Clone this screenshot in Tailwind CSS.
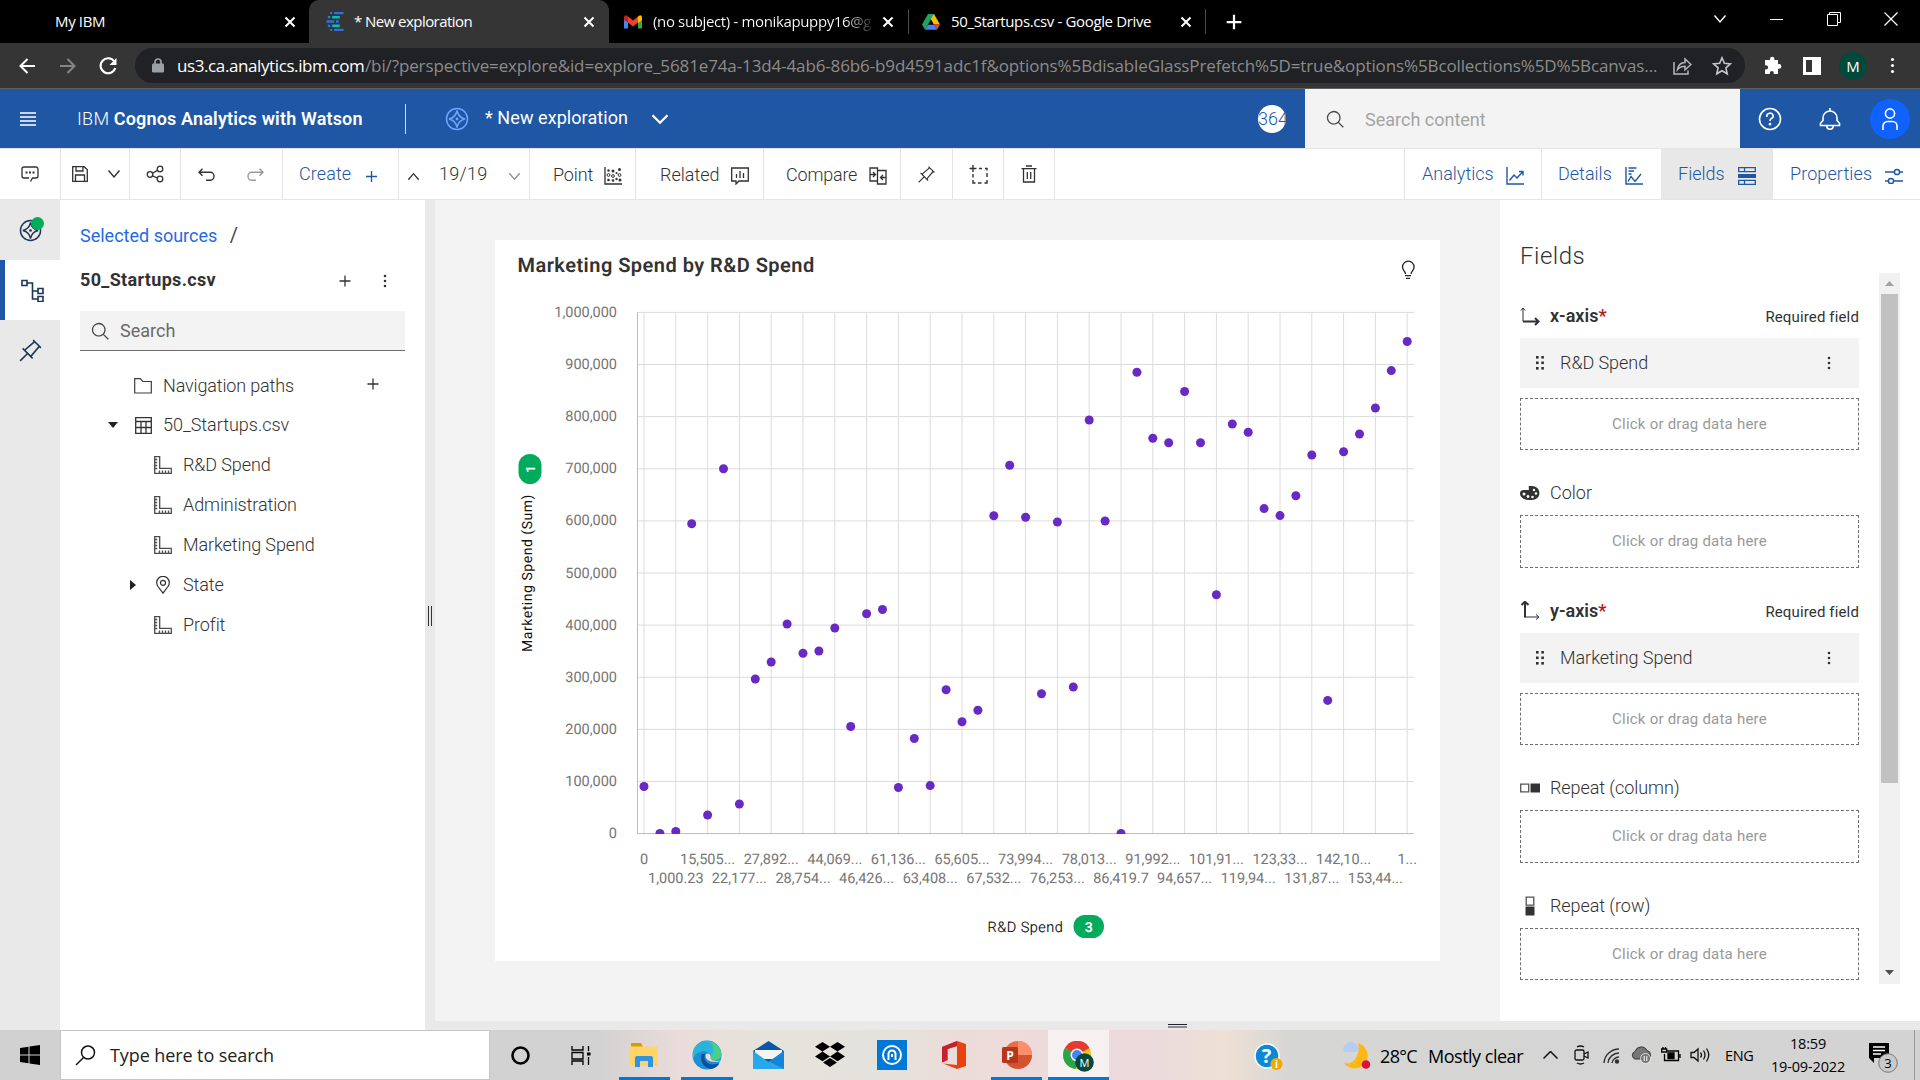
<!DOCTYPE html>
<html lang="en">
<head>
<meta charset="utf-8">
<title>* New exploration</title>
<script src="https://cdn.jsdelivr.net/npm/@tailwindcss/browser@4"></script>
</head>
<body class="w-[1920px] h-[1080px] overflow-hidden bg-white font-['Roboto',sans-serif] text-[18px] leading-6 text-[#323232]">
<svg class="hidden">
  <symbol id="x" viewBox="0 0 12 12"><path d="M1.5 1.5l9 9M10.500 1.500l-9 9" stroke="currentColor" stroke-width="2" fill="none"/></symbol>
  <symbol id="plus" viewBox="0 0 16 16"><path d="M8 2.500v11M2.500 8h11" stroke="currentColor" stroke-width="1.300" fill="none"/></symbol>
  <symbol id="chev" viewBox="0 0 16 16"><path d="M2.500 4.500L8 11l5.500-6.500" stroke="currentColor" stroke-width="1.400" fill="none"/></symbol>
  <symbol id="search" viewBox="0 0 32 32"><path fill="currentColor" d="M30 28.590L22.450 21A11 11 0 1 0 21 22.450L28.590 30zM5 14a9 9 0 1 1 9 9 9 9 0 0 1-9-9z"/></symbol>
  <symbol id="dots" viewBox="0 0 16 16"><g fill="currentColor"><circle cx="8" cy="3" r="1.300"/><circle cx="8" cy="8" r="1.300"/><circle cx="8" cy="13" r="1.300"/></g></symbol>
  <symbol id="pin" viewBox="0 0 32 32"><path fill="currentColor" d="M28.590,13.310,30,11.900,20,2,18.690,3.420,19.870,4.600,8.380,14.320,6.660,12.610,5.250,14l5.660,5.680L2,28.580,3.410,30l8.910-8.910L18,26.750l1.390-1.420-1.710-1.710L27.400,12.130ZM16.260,22.200,9.800,15.740,21.290,6,26,10.710Z"/></symbol>
  <symbol id="explore" viewBox="0 0 24 24"><g fill="none" stroke="currentColor" stroke-width="1.500"><circle cx="12" cy="12" r="10.500"/><path d="M12 3.500c.8 4.500 3.500 7.500 8 8.500-4.500 1-7.200 4-8 8.500-.8-4.500-3.500-7.500-8-8.500 4.500-1 7.200-4 8-8.500z"/></g><circle cx="12" cy="12" r="1.400" fill="currentColor"/></symbol>
  <symbol id="ruler" viewBox="0 0 18 18"><path d="M.7.7h5v11.600h11.600v5H.7zM.7 3.500h2.500M.7 6.500h2.500M.7 9.500h2.500M.7 12.500h2.500M5.500 17v-2.500M8.500 17v-2.500M11.500 17v-2.500M14.500 17v-2.500" fill="none" stroke="#4c4c4c" stroke-width="1.300"/></symbol>
  <symbol id="drag" viewBox="0 0 10 14"><g fill="#323232"><rect x="1" y="0" width="2.600" height="2.600"/><rect x="6.300" y="0" width="2.600" height="2.600"/><rect x="1" y="5.500" width="2.600" height="2.600"/><rect x="6.300" y="5.500" width="2.600" height="2.600"/><rect x="1" y="11" width="2.600" height="2.600"/><rect x="6.300" y="11" width="2.600" height="2.600"/></g></symbol>
</svg>

<!-- tab strip -->
<div class="flex h-[43px] bg-black text-white font-['Open_Sans',sans-serif] text-[15px] tracking-[-0.36px]">
  <div class="flex items-center w-[309px] pl-[55px] pr-[13px]"><span class="flex-1 pb-0.5">My IBM</span><svg class="size-3"><use href="#x"/></svg></div>
  <div class="flex items-center w-[300px] pl-4 pr-[14px] bg-[#353535] rounded-t-[10px]">
    <svg class="w-5 h-[19px] mr-[9px]" viewBox="0 0 20 20"><path d="M9 1h10M1 10h8M11 10h3M9 19h10" stroke="#2f6fde" stroke-width="2.600"/><path d="M7 5.500h8M7 14.500h8" stroke="#08bdba" stroke-width="2.600"/><path d="M5 1h2M2.500 5.500h2.500M2.500 14.500h2.500M5 19h2" stroke="#1c86c4" stroke-width="2.400"/></svg>
    <span class="flex-1 tracking-[-0.55px] pb-0.5">* New exploration</span><svg class="size-3"><use href="#x"/></svg></div>
  <div class="flex items-center w-[299px] pl-[15px] pr-[14px]">
    <svg class="w-[18px] h-[14px] mr-[11px]" viewBox="0 0 18 14"><path d="M0 2v11.500h4V6z" fill="#4285f4"/><path d="M18 2v11.500h-4V6z" fill="#34a853"/><path d="M14 1.500L16 .3q2 0 2 2V5l-4 3z" fill="#fbbc04"/><path d="M4 1.500l5 4 5-4V7.500l-5 4-5-4z" fill="#ea4335"/><path d="M0 5V2.300Q.3 0 2.500.4L4 1.500v6z" fill="#c5221f"/></svg>
    <span class="w-[219px] mr-[10px] pb-0.5 overflow-hidden whitespace-nowrap bg-linear-to-r from-white from-88% to-[#222] bg-clip-text text-transparent">(no subject) - monikapuppy16@g</span><svg class="size-3 shrink-0"><use href="#x"/></svg></div>
  <div class="flex items-center w-[298px] pl-[13px] pr-[13px] my-[9px] border-x border-[#4a4a4a]">
    <svg class="w-[18px] h-4 mr-[11px]" viewBox="0 0 18 16"><path d="M6 0h6l6 10.500h-6z" fill="#fbbc04"/><path d="M12 10.500h6l-3 5.300z" fill="#ea4335"/><path d="M6 10.500h6l3 5.300H3z" fill="#4285f4"/><path d="M9 5.200l3 5.300H6z" fill="#000"/><path d="M6 0h6L3 15.800 0 10.500z" fill="#1ea362"/><path d="M9 5.200L12 0l0 0v10.500z" fill="#fbbc04"/></svg>
    <span class="flex-1 pb-0.5">50_Startups.csv - Google Drive</span><svg class="size-3"><use href="#x"/></svg></div>
  <div class="flex items-center pl-[19px]"><svg class="size-[18px] text-white" viewBox="0 0 16 16"><path d="M8 1.500v13M1.500 8h13" stroke="currentColor" stroke-width="2"/></svg></div>
  <div class="ml-auto flex h-[38px] items-center">
    <div class="w-[57px] flex justify-center"><svg class="size-4"><use href="#chev"/></svg></div>
    <div class="w-[57px] flex justify-center"><div class="w-[13px] h-px bg-white"></div></div>
    <div class="w-[57px] flex justify-center"><svg class="size-[14px]" viewBox="0 0 14 14" fill="none" stroke="#fff"><path d="M.5 2.500h10v11h-10zM2.500 2.500V.5h11v10H10.500"/></svg></div>
    <div class="w-[58px] flex justify-center"><svg class="size-[14px]" viewBox="0 0 14 14" stroke="#fff" stroke-width="1.200"><path d="M.5.5l13 13M13.500.5l-13 13"/></svg></div>
  </div>
</div>

<!-- address bar -->
<div class="flex h-[46px] items-center bg-[#353535] border-b border-[#5f5f5f] text-white font-['Open_Sans',sans-serif]">
  <svg class="w-[17px] h-4 ml-[19px]" viewBox="0 0 17 16" fill="none" stroke="#fff" stroke-width="2"><path d="M16 8H2M8.500 1L1.500 8l7 7"/></svg>
  <svg class="w-[17px] h-4 ml-[23px]" viewBox="0 0 17 16" fill="none" stroke="#858585" stroke-width="2"><path d="M1 8h14M8.500 1l7 7-7 7"/></svg>
  <svg class="size-[18px] ml-[23px]" viewBox="0 0 18 18" fill="none" stroke="#fff" stroke-width="2.100"><path d="M15.300 4.500A7.500 7.500 0 1 0 16.300 11"/><path d="M17.500 1v7h-7z" fill="#fff" stroke="none"/></svg>
  <div class="flex items-center w-[1610px] h-[35px] ml-[18px] rounded-full bg-[#202124] pl-[17px]">
    <svg class="w-3 h-[15px] mr-[13px]" viewBox="0 0 12 15"><path d="M3 6V4a3 3 0 0 1 6 0v2" fill="none" stroke="#9aa0a6" stroke-width="1.700"/><rect y="5.500" width="12" height="9" rx="1.200" fill="#9aa0a6"/></svg>
    <span class="w-[188px] text-[17px] tracking-[-0.4px]">us3.ca.analytics.ibm.com</span><span class="w-[1292px] whitespace-nowrap text-[17px] tracking-[-0.12px] text-[#8c8c8c]">/bi/?perspective=explore&amp;id=explore_5681e74a-13d4-4ab6-86b6-b9d4591adc1f&amp;options%5BdisableGlassPrefetch%5D=true&amp;options%5Bcollections%5D%5Bcanvas...</span>
    <svg class="w-[19px] h-[18px] ml-[16px]" viewBox="0 0 19 18" fill="none" stroke="#b4b6b8" stroke-width="1.500"><path d="M1 5v12h14v-3.500"/><path d="M4.500 12.500C5.200 8 8 5.700 12 5.500V2l6 5.500-6 5.300V9.200c-3.500 0-5.500.8-7.500 3.300z"/></svg>
    <svg class="size-5 ml-5" viewBox="0 0 20 20" fill="none" stroke="#c4c6c8" stroke-width="1.600"><path d="M10 1.800l2.400 5.500 6 .6-4.500 4 1.300 5.900L10 14.700l-5.200 3.100 1.300-5.900-4.500-4 6-.6z"/></svg>
  </div>
  <svg class="size-[19px] ml-[18px]" viewBox="0 0 19 19" fill="#fff"><path d="M7 4V3a2.200 2.200 0 0 1 4.400 0v1H15v4h1a2.400 2.400 0 0 1 0 4.800h-1V18h-4.200v-1a2 2 0 0 0-4 0v1H2v-4.500h1a2 2 0 0 0 0-4.200H2V4z"/></svg>
  <svg class="w-[18px] h-[18px] ml-[21px]" viewBox="0 0 18 18"><path d="M0 0h18v18H0zM3 3v12h6V3z" fill="#fff" fill-rule="evenodd"/></svg>
  <div class="size-7 ml-[18px] rounded-full bg-[#00493c] text-center text-[15px] leading-7">M</div>
  <svg class="size-[19px] ml-4"><use href="#dots"/></svg>
</div>

<!-- product header -->
<div class="flex h-[59px] items-center bg-[#1f57a4] text-white">
  <svg class="w-4 h-[14px] ml-5" viewBox="0 0 16 14" stroke="#fff" stroke-width="1.300"><path d="M0 1h16M0 5h16M0 9h16M0 13h16"/></svg>
  <div class="ml-[41px] w-[328px] whitespace-nowrap"><span class="font-light tracking-[0.3px]">IBM</span> <span class="font-semibold tracking-[0.16px]">Cognos Analytics with Watson</span></div>
  <div class="w-px h-[30px] bg-white/80"></div>
  <svg class="size-6 ml-[39px] text-[#6ea6ff]"><use href="#explore"/></svg>
  <div class="ml-4 w-[142px] whitespace-nowrap tracking-[0.07px] pb-0.5">* New exploration</div>
  <svg class="size-5 ml-[23px]" viewBox="0 0 16 16"><path d="M2 5l6 6 6-6" stroke="#fff" stroke-width="1.800" fill="none"/></svg>
  <div class="size-7 ml-[588px] rounded-full bg-white text-[#1f57a4] overflow-hidden whitespace-nowrap leading-7 font-light">364</div>
  <div class="flex items-center w-[435px] h-full ml-auto bg-[#f3f3f3]">
    <svg class="size-5 ml-5 text-[#464646]"><use href="#search"/></svg><span class="ml-[20px] pt-0.5 text-[#a4a4a4]">Search content</span>
  </div>
  <div class="w-[60px] flex justify-center"><svg class="size-6" viewBox="0 0 24 24" fill="none" stroke="#fff" stroke-width="1.600"><circle cx="12" cy="12" r="10.500"/><path d="M8.800 10V9a3.200 2.800 0 1 1 4.500 2.500c-.9.500-1.300 1-1.300 2.500"/><circle cx="12" cy="17.200" r=".6"/></svg></div>
  <div class="w-[60px] flex justify-center"><svg class="size-6" viewBox="0 0 24 24" fill="none" stroke="#fff" stroke-width="1.600"><path d="M12 1v3M2.500 18.500v-2.300L5 13.500V11a7 7 0 0 1 14 0v2.500l2.500 2.700v2.300zM8.800 19a3.200 3.200 0 0 0 6.400 0"/></svg></div>
  <div class="w-[60px] flex justify-center"><div class="flex items-center justify-center size-10 rounded-full bg-[#0f62fe]"><svg class="w-4 h-[22px]" viewBox="0 0 16 22" fill="none" stroke="#fff" stroke-width="1.600"><circle cx="8" cy="5.500" r="4.600"/><path d="M1 22v-4a4.500 4.500 0 0 1 4.500-4.500h5A4.500 4.500 0 0 1 15 18v4"/></svg></div></div>
</div>

<!-- toolbar -->
<div class="flex h-[52px] border-y border-[#e5e5e5] bg-white">
  <div class="flex w-[61px] items-center justify-center border-r border-[#e5e5e5]"><svg class="w-[18px] h-4" viewBox="0 0 18 16" fill="none" stroke="#323232" stroke-width="1.300"><path d="M9.500 15.500l2-3.500H15a2 2 0 0 0 2-2V3a2 2 0 0 0-2-2H3a2 2 0 0 0-2 2v7a2 2 0 0 0 2 2h5"/><path d="M4.500 6.500h2M8 6.500h2M11.500 6.500h2" stroke-width="2"/></svg></div>
  <div class="flex w-[69px] items-center pl-[11px] border-r border-[#e5e5e5]"><svg class="size-4" viewBox="0 0 16 16" fill="none" stroke="#323232" stroke-width="1.300"><path d="M.7.7h11.500l3.100 3.100v11.500H.7zM4 1v4h7V1M3.500 15V9h9v6"/></svg><svg class="size-4 ml-[18px]"><use href="#chev"/></svg></div>
  <div class="flex w-[51px] items-center justify-center border-r border-[#e5e5e5]"><svg class="size-[18px]" viewBox="0 0 18 18" fill="none" stroke="#323232" stroke-width="1.300"><circle cx="4" cy="9.500" r="2.800"/><circle cx="14" cy="4" r="2.800"/><circle cx="14" cy="14" r="2.800"/><path d="M6.500 8.200l5-2.800M6.500 10.800l5 2.200"/></svg></div>
  <div class="flex w-[102px] items-center border-r border-[#e5e5e5]"><svg class="w-[17px] h-[13px] ml-[17px]" viewBox="0 0 17 13" fill="none" stroke="#323232" stroke-width="1.400"><path d="M4.500.700L1 4.200l3.500 3.500M1 4.200h11.500a3.500 4 0 0 1 0 8H8"/></svg><svg class="w-[17px] h-[13px] ml-[32px]" viewBox="0 0 17 13" fill="none" stroke="#999" stroke-width="1.400"><path d="M12.500.700L16 4.200l-3.500 3.500M16 4.200H4.500a3.500 4 0 0 0 0 8H9"/></svg></div>
  <div class="flex w-[116px] items-center pl-[16px] border-r border-[#e5e5e5] text-[#1f57a4] font-light"><span class="w-[67px] tracking-[0.1px]">Create</span><svg class="size-[11px] mt-1" viewBox="0 0 13 13" stroke="currentColor" stroke-width="1.600"><path d="M6.500 0v13M0 6.500h13"/></svg></div>
  <div class="flex w-[131px] items-center pl-[7px] border-r border-[#e5e5e5] font-light"><svg class="size-[15px] rotate-180 mt-1"><use href="#chev"/></svg><span class="ml-[18px] w-[51px] tracking-[0.3px]">19/19</span><svg class="size-[15px] ml-[17px] mt-1 text-[#8d8d8d]"><use href="#chev"/></svg></div>
  <div class="flex w-[106px] items-center pl-[23px] border-r border-[#e5e5e5] font-light"><span class="w-[51px] pt-0.5 tracking-[-0.1px]">Point</span><svg class="size-[18px] mt-1" viewBox="0 0 18 18"><path d="M1 0v17h17" stroke="#323232" stroke-width="1.300" fill="none"/><g fill="#323232"><circle cx="4.500" cy="3.500" r="1.200"/><circle cx="9" cy="4" r="1.500"/><circle cx="12.500" cy="6" r="1.100"/><circle cx="15.500" cy="2.500" r="1.500"/><circle cx="4.500" cy="13" r="1.300"/><circle cx="9" cy="13.500" r="1.300"/><circle cx="12.500" cy="12" r="1.200"/><circle cx="16" cy="13" r="1.500"/></g><g fill="none" stroke="#323232"><circle cx="4.500" cy="8" r="1.400"/><circle cx="9" cy="9" r="1.400"/><circle cx="15.500" cy="8" r="1.400"/></g></svg></div>
  <div class="flex w-[128px] items-center pl-[24px] border-r border-[#e5e5e5] font-light"><span class="w-[71px] pt-0.5">Related</span><svg class="size-[18px] mt-1" viewBox="0 0 18 18" fill="none" stroke="#323232" stroke-width="1.300"><path d="M.7 1h16.600v13H8l-3 3v-3H.7zM5.500 7v4M9 4v7M12.500 6v5"/></svg></div>
  <div class="flex w-[137px] items-center pl-[22px] border-r border-[#e5e5e5] font-light"><span class="w-[83px] pt-0.5 tracking-[-0.2px]">Compare</span><svg class="size-[18px] mt-1" viewBox="0 0 18 18" fill="none" stroke="#323232" stroke-width="1.300"><path d="M8.500 3V1H1v13h7.500zM8.500 3.500H17V17H8.500v-3M1 7.500h5M4 5l2.500 2.500L4 10M17 10.500h-5.500M14 8l-2.500 2.500L14 13"/></svg></div>
  <div class="flex w-[52px] items-center justify-center border-r border-[#e5e5e5]"><svg class="size-[19px]"><use href="#pin"/></svg></div>
  <div class="flex w-[51px] items-center justify-center border-r border-[#e5e5e5]"><svg class="size-[19px]" viewBox="0 0 19 19" fill="none" stroke="#323232" stroke-width="1.400"><path d="M4 0v7M0.500 3.500h7M10 3.500h3M16 3.500h2v2M18 8v4M18 15v3h-2.500M12.500 18H9M6.500 18H4v-3M4 12.500V9"/></svg></div>
  <div class="flex w-[51px] items-center justify-center border-r border-[#e5e5e5]"><svg class="w-4 h-[18px]" viewBox="0 0 16 18" fill="none" stroke="#323232" stroke-width="1.300"><path d="M5 1h6M.5 3.700h15M2.500 4v13h11V4M6.300 7v7M9.700 7v7"/></svg></div>
  <div class="flex ml-auto text-[#1f57a4] font-light">
    <div class="flex w-[137px] items-center pl-[17px] border-l border-[#e5e5e5]"><span class="w-[84px]">Analytics</span><svg class="size-[18px] mt-1" viewBox="0 0 18 18" fill="none" stroke="currentColor" stroke-width="1.400"><path d="M1 0v17h17M3.500 13.500L8 8l3 3 6-6.500M13 4.500h4v4"/></svg></div>
    <div class="flex w-[120px] items-center pl-[16px] border-l border-[#e5e5e5]"><span class="w-[67px]">Details</span><svg class="size-[18px] mt-1" viewBox="0 0 18 18" fill="none" stroke="currentColor" stroke-width="1.400"><path d="M1 0v17h17M3 14.500l3-5 4 5L16 7M3.500 1h8M3.500 4h5.500M3.500 7h3"/></svg></div>
    <div class="flex w-[112px] items-center pl-[17px] bg-[#e8e8e8]"><span class="w-[60px]">Fields</span><svg class="size-[18px] mt-1" viewBox="0 0 18 18" fill="none" stroke="currentColor" stroke-width="1.300"><path d="M.7.7h16.600v4H.7zM.7 13.300h16.600v4H.7zM6.500 1v4M6.500 13v4"/><path d="M0 7h18v4H0z" fill="currentColor" stroke="none"/></svg></div>
    <div class="flex w-[147px] items-center pl-[17px]"><span class="w-[95px] tracking-[0.1px]">Properties</span><svg class="w-[18px] h-4 mt-1" viewBox="0 0 18 16" fill="none" stroke="currentColor" stroke-width="1.500"><path d="M0 4h9M15 4h3M0 13h3M9 13h9"/><circle cx="12" cy="4" r="2.600"/><circle cx="6" cy="13" r="2.600"/></svg></div>
  </div>
</div>

<!-- workspace -->
<div class="flex h-[830px]">
  <div class="w-[60px] bg-[#e9e9e9] text-[#1d3557]">
    <div class="relative flex h-[60px] items-center justify-center"><svg class="size-[23px]"><use href="#explore"/></svg><div class="absolute left-[31px] top-[17px] size-[13px] rounded-full bg-[#00ab5b]"></div></div>
    <div class="flex h-[60px] items-center bg-white border-l-5 border-[#1f57a4] pl-4"><svg class="w-[23px] h-[23px]" viewBox="0 0 23 23" fill="none" stroke="currentColor" stroke-width="1.600"><path d="M1 1.500h5v5H1zM17 9.500h5v5h-5zM17 17.500h5v5h-5zM6 4h5.500v16H17M11.500 12H17"/></svg></div>
    <div class="flex h-[60px] items-center justify-center"><svg class="size-[25px]"><use href="#pin"/></svg></div>
  </div>

  <div class="w-[365px] pl-5 pt-[23px]">
    <div class="text-[#1f6ae8]">Selected sources <span class="ml-2 text-[#464646] text-[20px]">/</span></div>
    <div class="flex items-center mt-5 h-6"><span class="w-[257px] font-bold tracking-[0.33px]">50_Startups.csv</span><svg class="size-4 mt-0.5"><use href="#plus"/></svg><svg class="size-4 ml-6 mt-0.5"><use href="#dots"/></svg></div>
    <div class="flex items-center w-[325px] h-10 mt-[19px] pl-[10px] bg-[#f3f3f3] border-b border-[#6f6f6f]"><svg class="size-[20px] text-[#464646]"><use href="#search"/></svg><span class="ml-[10px] text-[#6a6a6a]">Search</span></div>
    <div class="mt-[15px] font-light tracking-[-0.1px]">
      <div class="flex h-[39px] items-center pl-[54px]"><svg class="w-[18px] h-4 mr-[11px] shrink-0" viewBox="0 0 18 16" fill="none" stroke="#3c3c3c" stroke-width="1.200"><path d="M.7 15V.7h5.600l2.500 2.800h8.500V15z"/></svg><span class="w-[202px] tracking-[-0.15px]">Navigation paths</span><svg class="size-4 -mt-[3px]"><use href="#plus"/></svg></div>
      <div class="flex h-10 items-center pl-7"><svg class="w-[10px] h-[6px] mr-[17px]" viewBox="0 0 10 6"><path d="M0 0h10L5 6z" fill="#222"/></svg><svg class="size-[17px] mr-[11px]" viewBox="0 0 17 17" fill="none" stroke="#323232" stroke-width="1.300"><path d="M.7.7h15.600v15.600H.7zM.7 4.500h15.600M.7 10.500h15.600M6 4.500v12M11 4.500v12"/></svg><span class="tracking-[-0.02px]">50_Startups.csv</span></div>
      <div class="flex h-10 items-center pl-[74px]"><svg class="size-[18px] mr-[11px]"><use href="#ruler"/></svg>R&amp;D Spend</div>
      <div class="flex h-10 items-center pl-[74px]"><svg class="size-[18px] mr-[11px]"><use href="#ruler"/></svg>Administration</div>
      <div class="flex h-10 items-center pl-[74px]"><svg class="size-[18px] mr-[11px]"><use href="#ruler"/></svg>Marketing Spend</div>
      <div class="flex h-10 items-center pl-[50px]"><svg class="w-[6px] h-[10px] mr-5" viewBox="0 0 6 10"><path d="M0 0v10l6-5z" fill="#222"/></svg><svg class="w-[14px] h-[18px] mr-[13px]" viewBox="0 0 14 18" fill="none" stroke="#323232" stroke-width="1.200"><path d="M7 17.200L2 10.500A6.300 6.300 0 1 1 12 10.500z"/><circle cx="7" cy="6.800" r="2.500"/></svg>State</div>
      <div class="flex h-10 items-center pl-[74px]"><svg class="size-[18px] mr-[11px]"><use href="#ruler"/></svg>Profit</div>
    </div>
  </div>

  <div class="flex w-[10px] justify-center bg-[#e9e9e9] pt-[406px]"><div class="w-1 h-5 border-x border-[#323232]"></div></div>

  <div class="flex flex-col w-[1485px]">
    <div class="flex h-[821px]">
      <div class="w-[1065px] bg-[#f3f3f3] pt-10 pl-[60px]">
        <svg class="w-[945px] h-[721px] bg-white" viewBox="495 240 945 721" id="chart" text-rendering="geometricPrecision">
          <text x="517.500" y="272" font-size="20" font-weight="600" letter-spacing=".47" fill="#323232">Marketing Spend by R&amp;D Spend</text>
          <g fill="none" stroke="#222" stroke-width="1.300"><path d="M1405.500 274c0-3-3-3.500-3-7a5.800 5.800 0 0 1 11.600 0c0 3.500-3 4-3 7M1405 275.700h6M1406 278.300h4"/></g>
          <text transform="translate(532 652) rotate(-90)" font-size="14" letter-spacing=".54" fill="#111">Marketing Spend (Sum)</text>
          <rect x="518.500" y="454" width="23" height="30" rx="11.500" fill="#00ab5b"/>
          <text transform="translate(535 469) rotate(-90)" font-size="13" font-weight="700" text-anchor="middle" fill="#fff">1</text>
          <text x="987.500" y="932" font-size="14.500" letter-spacing=".5" font-weight="300" fill="#000" stroke="#000" stroke-width=".15">R&amp;D Spend</text>
          <rect x="1073.500" y="915" width="30.500" height="23" rx="11.500" fill="#00ab5b"/>
          <text x="1088.800" y="931.500" font-size="14" font-weight="700" text-anchor="middle" fill="#fff">3</text>
        </svg>
      </div>
      <div class="flex w-[420px] bg-white">
        <div class="w-[339px] ml-5 font-light">
          <div class="pt-11 h-[94px] text-2xl leading-6 tracking-[0.5px]">Fields</div>
          <div class="flex h-11 items-center"><svg class="size-5 mr-[10px]" viewBox="0 0 20 20" fill="none" stroke="#323232"><path d="M3 15.500V2M.8 4.500L3 2l2.200 2.500"/><path d="M3 15.500h15.500M15 12l3.500 3.500L15 19" stroke-width="2"/></svg><span class="flex-1 font-semibold">x-axis<span class="text-[#b81921]">*</span></span><span class="text-[15px] font-normal tracking-[0.14px] pt-0.5">Required field</span></div>
          <div class="flex h-[50px] items-center bg-[#f3f3f3] pl-[15px]"><svg class="w-[10px] h-[14px] mr-[15px]"><use href="#drag"/></svg><span class="w-[261px] tracking-[-0.05px]">R&amp;D Spend</span><svg class="size-4"><use href="#dots"/></svg></div>
          <div class="flex h-[52px] mt-[10px] items-center justify-center border border-dashed border-[#6f6f6f] text-[15px] font-normal tracking-[0.23px] text-[#999]">Click or drag data here</div>
          <div class="flex h-11 mt-[21px] items-center"><svg class="w-5 h-[14px] mr-[10px]" viewBox="0 0 20 14"><path d="M9 0h3a7.500 7 0 0 1 0 14H9C4 14 0 11 0 7.500 0 5 1.500 4 4 4h4c2 0 0-2.500 1-4z" fill="#323232"/><g fill="#fff"><circle cx="14" cy="4" r="1.200"/><circle cx="4" cy="8" r="1.500"/><circle cx="8" cy="10.500" r="1.400"/><circle cx="12.500" cy="11" r="1.300"/><circle cx="16" cy="7.500" r="1.300"/></g></svg>Color</div>
          <div class="flex h-[53px] items-center justify-center border border-dashed border-[#6f6f6f] text-[15px] font-normal tracking-[0.23px] text-[#999] pb-px">Click or drag data here</div>
          <div class="flex h-11 mt-[21px] items-center"><svg class="size-5 mr-[10px]" viewBox="0 0 20 20" fill="none" stroke="#323232"><path d="M5 16h14M16 13.500l2.800 2.500L16 18.500"/><path d="M5 16.500V1M1.500 4L5 .7 8.500 4" stroke-width="2"/></svg><span class="flex-1 font-semibold">y-axis<span class="text-[#b81921]">*</span></span><span class="text-[15px] font-normal tracking-[0.14px] pt-0.5">Required field</span></div>
          <div class="flex h-[50px] items-center bg-[#f3f3f3] pl-[15px]"><svg class="w-[10px] h-[14px] mr-[15px]"><use href="#drag"/></svg><span class="w-[261px] tracking-[-0.05px]">Marketing Spend</span><svg class="size-4"><use href="#dots"/></svg></div>
          <div class="flex h-[52px] mt-[10px] items-center justify-center border border-dashed border-[#6f6f6f] text-[15px] font-normal tracking-[0.23px] text-[#999]">Click or drag data here</div>
          <div class="flex h-11 mt-[21px] items-center tracking-[-0.07px]"><svg class="w-5 h-[10px] mr-[10px]" viewBox="0 0 20 10"><path d="M.7 1.200h8v7.600h-8z" fill="#fff" stroke="#555" stroke-width="1.300"/><path d="M10.500.5H20v9h-9.500z" fill="#323232"/></svg>Repeat (column)</div>
          <div class="flex h-[53px] items-center justify-center border border-dashed border-[#6f6f6f] text-[15px] font-normal tracking-[0.23px] text-[#999] pb-px">Click or drag data here</div>
          <div class="flex h-11 mt-[21px] items-center tracking-[-0.07px]"><svg class="w-5 h-[20px] mr-[10px]" viewBox="0 0 20 20"><path d="M6.200 1.200h7.600v8H6.200z" fill="#fff" stroke="#555" stroke-width="1.300"/><path d="M5.500 10.500h9V19.500h-9z" fill="#323232"/></svg>Repeat (row)</div>
          <div class="flex h-[52px] items-center justify-center border border-dashed border-[#6f6f6f] text-[15px] font-normal tracking-[0.23px] text-[#999]">Click or drag data here</div>
        </div>
        <div class="flex flex-col items-center w-[21px] h-[711px] mt-[73px] ml-5 bg-[#f1f1f1]">
          <div class="flex h-[21px] items-center"><svg class="w-[9px] h-[5px]" viewBox="0 0 9 5"><path d="M0 5h9L4.500 0z" fill="#a3a3a3"/></svg></div>
          <div class="w-[17px] h-[489px] bg-[#c1c1c1]"></div>
          <div class="flex flex-1 items-end pb-[9px]"><svg class="w-[9px] h-[5px]" viewBox="0 0 9 5"><path d="M0 0h9L4.500 5z" fill="#4f4f4f"/></svg></div>
        </div>
      </div>
    </div>
    <div class="h-[9px] bg-[#e9e9e9] pt-[3px] pl-[733px]"><div class="w-[19px] h-1 border-t border-b-2 border-t-[#222] border-b-[#8d8d8d]"></div></div>
  </div>
</div>

<!-- taskbar -->
<div class="flex h-[50px] bg-[linear-gradient(90deg,#d1d1d1_0,#d3d2d2_600px,#eadcda_680px,#e6e3dd_780px,#e4e2dc_880px,#ecdcd9_960px,#ecdadd_1150px,#eee0d4_1225px,#d6d6d5_1290px,#d3d3d3_1920px)] text-black font-['Open_Sans',sans-serif]">
  <div class="flex w-[60px] items-center justify-center"><svg class="size-5" viewBox="0 0 20 20"><path d="M0 3l8.500-1.200V9.500H0zM9.500 1.600L20 0v9.500H9.500zM0 10.500h8.500v7.700L0 17zM9.500 10.500H20V20L9.500 18.400z"/></svg></div>
  <div class="flex w-[430px] items-center bg-white border border-[#c6c6c6] pl-[14px]"><svg class="size-[21px]" viewBox="0 0 21 21" fill="none" stroke="#111" stroke-width="1.500"><circle cx="13" cy="7.500" r="6.500"/><path d="M8.500 12.500L1 20"/></svg><span class="ml-[14px] text-[#222] tracking-[-0.09px]">Type here to search</span></div>
  <div class="flex w-[60px] items-center justify-center"><svg class="size-[19px]" viewBox="0 0 19 19"><circle cx="9.500" cy="9.500" r="8" fill="none" stroke="#000" stroke-width="2.600"/></svg></div>
  <div class="flex w-[62px] items-center justify-center"><svg class="w-5 h-[19px]" viewBox="0 0 20 19" fill="none" stroke="#000" stroke-width="1.300"><path d="M1 0v4h11V0M1 6.500h11v6.500H1zM1 19v-4h11v4M17.500 0v5M17.500 11v8"/><path d="M16 6.500h3.500v3H16z" fill="#000" stroke="none"/></svg></div>
  <div class="flex flex-col w-[64px] items-center justify-end"><svg class="w-[28px] h-[26px] mb-[9px]" viewBox="0 0 28 26"><path d="M1 1h10l2 4H1z" fill="#d99a00"/><path d="M0 4.500h26q2 0 2 2V24H0z" fill="#ffd568"/><path d="M5 25v-9q0-2 2-2h14q2 0 2 2v9h-5v-6h-8v6z" fill="#2f93e0"/></svg><div class="w-[51px] h-[3px] bg-[#0078d7]"></div></div>
  <div class="flex flex-col w-[62px] items-center justify-end"><svg class="size-[30px] mb-[7px]" viewBox="0 0 30 30"><circle cx="15" cy="15" r="14.500" fill="#1b8fd6"/><path d="M1 12A14.500 14.500 0 0 1 29.500 14c0 5-4 6.500-8 6.500-3 0-4-1.500-3-3s1-5-4-6C8 10 3 12 1 19z" fill="#4bcf86"/><path d="M1 14C3 4 11 0 18 2c4 2 4 11 2 14-1-4-5-6-9-5s-8 5-10 3z" fill="#27b5e0"/><path d="M10 14c-3 7 2 14 9 15 4-.5 7-3 8.500-6C19 27 10 22 13 14z" fill="#0c4f9e"/><path d="M14 14c-2 5 3 9 13 7.500l1.500-1c-5 1-10 0-10-2.500 1-2-1-6-4.500-4z" fill="#eadcdc"/></svg><div class="w-[52px] h-[3px] bg-[#0078d7]"></div></div>
  <div class="flex w-[61px] items-center justify-center"><svg class="w-[31px] h-[28px]" viewBox="0 0 31 28"><path d="M0 10L15.500 0 31 10v18H0z" fill="#0a56a8"/><path d="M2 9h27v9H2z" fill="#f4f4f4"/><path d="M0 10l15.500 11L31 10v18H0z" fill="#28a8ea"/><path d="M31 28L12 18.500 15.500 21 31 10z" fill="#1583d6"/></svg></div>
  <div class="flex w-[62px] items-center justify-center"><svg class="w-[30px] h-[26px]" viewBox="0 0 30 26"><path d="M7.500 0L15 4.800 7.500 9.600 0 4.800zM22.500 0L30 4.800 22.500 9.600 15 4.800zM7.500 9.600L15 14.400 7.500 19.200 0 14.400zM22.500 9.600L30 14.400 22.500 19.200 15 14.400zM15 16l7 4.500L15 25l-7-4.500z"/></svg></div>
  <div class="flex w-[62px] items-center justify-center"><div class="flex size-[30px] items-center justify-center bg-[#0078d7]"><svg class="size-5" viewBox="0 0 20 20" fill="none" stroke="#fff" stroke-width="2"><circle cx="10" cy="10" r="9"/><path d="M6.500 15V9a3.500 3.500 0 0 1 7 0v6M10 9v3"/></svg></div></div>
  <div class="flex w-[62px] items-center justify-center"><svg class="w-6 h-[28px]" viewBox="0 0 24 28"><path d="M0 6L15 0l9 3v22l-9 3L1 22.500l14 1.500V5L5.500 8v11L0 21.500z" fill="#e8430e"/><path d="M0 6L15 0v5L5.500 8v11L0 21.500z" fill="#c4202d"/></svg></div>
  <div class="flex flex-col w-[63px] items-center justify-end"><svg class="w-[30px] h-7 mb-2" viewBox="0 0 30 28"><circle cx="16" cy="14" r="14" fill="#ed6c47"/><path d="M16 0a14 14 0 0 1 14 14H16z" fill="#ff8f6b"/><path d="M30 14a14 14 0 0 1-27 5l13-5z" fill="#d35230"/><rect y="6" width="16" height="16" rx="1.500" fill="#b7361a"/><text x="8" y="18.500" font-size="12" font-weight="700" text-anchor="middle" fill="#fff">P</text></svg><div class="w-[51px] h-[3px] bg-[#0078d7]"></div></div>
  <div class="flex flex-col w-[61px] items-center justify-end bg-white/60"><svg class="w-[31px] h-[31px] mb-[5px]" viewBox="0 0 31 31"><circle cx="14" cy="14" r="14" fill="#fbc116"/><path d="M14 14L2 7a14 14 0 0 1 24.500 0z" fill="#e33b2e"/><path d="M1.900 7A14 14 0 0 0 12 27.900L20 17.500l-6-3.500z" fill="#2ba24c"/><circle cx="14" cy="14" r="6.500" fill="#fff"/><circle cx="14" cy="14" r="5" fill="#4285f4"/><circle cx="21.500" cy="21.500" r="9.300" fill="#07493e"/><text x="21.500" y="25.500" font-size="11" text-anchor="middle" fill="#fff">M</text></svg><div class="w-[61px] h-[3px] bg-[#0078d7]"></div></div>
  <div class="flex ml-auto items-center">
    <svg class="w-[29px] h-7 mr-[58px] mt-1" viewBox="0 0 29 28"><circle cx="13" cy="13" r="12" fill="#0a8ad6" stroke="#fff" stroke-width="1.500"/><text x="12.500" y="20" font-size="20" font-weight="700" text-anchor="middle" fill="#fff">?</text><circle cx="22.500" cy="21" r="6" fill="#f2a900"/><text x="22.500" y="25" font-size="10" font-weight="700" text-anchor="middle" fill="#fff">i</text></svg>
    <svg class="w-[31px] h-7 mr-[8px]" viewBox="0 0 31 28"><path d="M17 2a13 13 0 1 1-14 20c10 3 17-10 14-20z" fill="#fdb813"/><path d="M4 11a4 4 0 0 1 .5-7A6 6 0 0 1 15 4a4 4 0 0 1 1 7z" fill="#b5cdf0"/><circle cx="25" cy="23.500" r="4.300" fill="#dd1133"/></svg>
    <span class="w-[48px] pt-0.5 tracking-[-0.66px]">28°C</span><span class="w-[115px] pt-0.5 whitespace-nowrap tracking-[-0.49px]">Mostly clear</span>
    <svg class="w-[15px] h-2" viewBox="0 0 15 8"><path d="M.5 7.500l7-7 7 7" fill="none" stroke="#111" stroke-width="1.500"/></svg>
    <svg class="w-[15px] h-5 ml-4" viewBox="0 0 15 20" fill="none" stroke="#111" stroke-width="1.300"><rect x="1" y="5" width="9" height="10" rx="1.500"/><path d="M10 9l4-2v6l-4-2M3 2q3.500-2 7 0M3 18q3.500 2 7 0"/></svg>
    <svg class="size-[17px] ml-[14px]" viewBox="0 0 17 17" fill="none" stroke="#333" stroke-width="1.400"><path d="M1 16A15 15 0 0 1 16 2M5 16A11 11 0 0 1 16 6M9 16a7 7 0 0 1 7-6"/><circle cx="14" cy="14.500" r="1.500" fill="#333"/></svg>
    <svg class="w-5 h-[18px] ml-[11px]" viewBox="0 0 20 18"><path d="M4 13a4 4 0 0 1 0-7.500 6.500 6.500 0 0 1 12-1A4.500 4.500 0 0 1 17 13z" fill="#777" stroke="#333"/><circle cx="14.500" cy="12.500" r="5" fill="#777" stroke="#fff" stroke-width=".7"/><path d="M13.200 10v5M15.800 10v5" stroke="#fff"/></svg>
    <svg class="w-5 h-4 ml-[10px]" viewBox="0 0 20 16" fill="none" stroke="#000" stroke-width="1.300"><path d="M5 4h12.500v9.500H3.500V7M19 7v4M.7 2h5v3h-5zM2 0v2M4.500 0v2"/><path d="M7 6h6v5.500H7z" fill="#000"/></svg>
    <svg class="w-5 h-4 ml-[9px]" viewBox="0 0 20 16" fill="none" stroke="#111" stroke-width="1.300"><path d="M1 5.500h3L8 2v12L4 10.500H1zM10.500 5.500q2 2.500 0 5M13.500 3.500q3 4.500 0 9M16.500 1.500q4.500 6.500 0 13"/></svg>
    <span class="w-[44px] ml-[15px] pt-px text-[14.500px] tracking-[-0.4px]">ENG</span>
    <div class="w-[80px] -ml-px text-center text-[14.500px] leading-[23px] tracking-[-0.15px]"><div>18:59</div><div>19-09-2022</div></div>
    <div class="w-[55px] ml-[11px] pl-[10px] pt-1"><svg class="w-[30px] h-[32px]" viewBox="0 0 30 32"><path d="M0 2h20v15H5v5l-5-5z"/><path d="M4 6h12M4 9.500h12M4 13h8" stroke="#fff" stroke-width="1.500"/><circle cx="19" cy="22" r="9.300" fill="#c9c9c9" stroke="#777"/><text x="19" y="27" font-size="13" text-anchor="middle">3</text></svg></div>
    <div class="w-px h-[50px] bg-[#999] mr-[5px]"></div>
  </div>
</div>

<script>
const chart = document.getElementById('chart');
const add = (tag, attrs, text) => {
  const e = document.createElementNS('http://www.w3.org/2000/svg', tag);
  for (const k in attrs) e.setAttribute(k, attrs[k]);
  if (text) e.textContent = text;
  chart.appendChild(e);
};
const X0 = 644, STEP = 31.8, TOP = 312.4, ROW = 52.12, BOTTOM = 833.6;
for (let i = 0; i <= 24; i++) add('path', {d: `M${X0 + i * STEP} ${TOP}V${BOTTOM}`, stroke: '#dcdcdc'});
for (let i = 0; i <= 10; i++) {
  const y = TOP + i * ROW;
  add('path', {d: `M637 ${y}H1414`, stroke: i === 10 ? '#bcbcbc' : '#dcdcdc'});
  add('text', {x: 617, y: y + 4.6, 'text-anchor': 'end', 'font-size': 14.5, fill: '#757575'}, ((10 - i) * 100000).toLocaleString('en-US'));
}
add('path', {d: `M637.5 ${TOP}V834`, stroke: '#bcbcbc'});
const labels = ['0','1,000.23','15,505...','22,177...','27,892...','28,754...','44,069...','46,426...','61,136...','63,408...','65,605...','67,532...','73,994...','76,253...','78,013...','86,419.7','91,992...','94,657...','101,91...','119,94...','123,33...','131,87...','142,10...','153,44...','1...'];
labels.forEach((t, i) => add('text', {x: X0 + i * STEP, y: i % 2 ? 883 : 864, 'text-anchor': 'middle', 'font-size': 14.5, fill: '#757575'}, t));
add('clipPath', {id: 'plot'});
chart.lastChild.innerHTML = '<rect x="630" y="300" width="800" height="534"/>';
const ys = [786.5,833.5,831.5,523.7,815,468.7,804,679,662,624,653.3,651,628,726.5,613.7,609.5,787.5,738.5,785.6,689.7,721.8,710.3,515.7,465.3,517.3,693.8,522,687,420,521,833.5,372.2,438.3,442.8,391.5,442.8,594.7,424,432.3,508.6,515.6,495.8,455,700.4,451.7,434,408,370.6,341.5];
ys.forEach((y, i) => add('circle', {cx: X0 + i * STEP / 2, cy: y, r: 4.5, fill: '#6929c4', 'clip-path': 'url(#plot)'}));
</script>
</body>
</html>
